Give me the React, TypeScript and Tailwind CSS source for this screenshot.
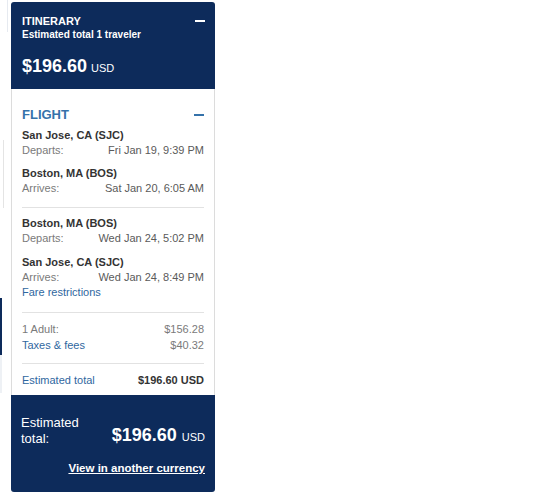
import React from 'react';

const Minus = ({ color }: { color: string }) => (
	<span className={`block h-[2px] w-[10px] ${color}`} />
);

const Stop = ({ city, label, time }: { city: string; label: string; time: string }) => (
	<div>
		<div className="text-[11px] font-bold leading-[15px] text-[#333]">{city}</div>
		<div className="flex justify-between text-[11px] leading-[15px]">
			<span className="text-[#7a7a7a]">{label}</span>
			<span className="text-[#5a5a5a]">{time}</span>
		</div>
	</div>
);

const App = () => {
	return (
		<div
			className="flex h-[498px] w-[550px] bg-white"
			style={{ fontFamily: '"Liberation Sans", Arial, sans-serif' }}
		>
			{/* bits of the page that are cut off on the left */}
			<div className="flex w-[11px] flex-col">
				<div className="h-[32px] w-[8px] border-r border-[#e6eaf0]" />
				<div className="ml-[3px] mt-[108px] h-[68px] w-px bg-[#e4e4e4]" />
				<div className="mt-[90px] h-[57px] w-[2px] bg-[#0d2b5b]" />
				<div className="h-[38px] w-[2px] bg-[#eef1f5]" />
			</div>

			<div className="mt-[2px] w-[204px]">
				{/* header */}
				<div className="rounded-t-[3px] bg-[#0d2b5b] px-[11px] pb-[10px] pt-[12px] text-white">
					<div className="flex items-center justify-between">
						<span className="text-[11px] font-bold leading-[14px]">ITINERARY</span>
						<span className="mr-[-1px]">
							<Minus color="bg-white" />
						</span>
					</div>
					<div className="text-[10px] font-bold leading-[14px]">Estimated total 1 traveler</div>
					<div className="mt-[13px] leading-[22px]">
						<span className="text-[18px] font-bold">$196.60</span>
						<span className="ml-[4px] text-[11px]">USD</span>
					</div>
				</div>

				{/* body */}
				<div className="border-x border-[#dcdcdc] bg-white px-[10px] pb-[7px] pt-[18px]">
					<div className="flex items-center justify-between">
						<span className="text-[13px] font-bold leading-[16px] text-[#3572aa]">FLIGHT</span>
						<Minus color="bg-[#3572aa]" />
					</div>

					<div className="mt-[5px] flex flex-col gap-[8px] border-b border-[#e2e2e2] pb-[11px]">
						<Stop city="San Jose, CA (SJC)" label="Departs:" time="Fri Jan 19, 9:39 PM" />
						<Stop city="Boston, MA (BOS)" label="Arrives:" time="Sat Jan 20, 6:05 AM" />
					</div>

					<div className="border-b border-[#e2e2e2] pb-[12px] pt-[8px]">
						<div className="flex flex-col gap-[9px]">
							<Stop city="Boston, MA (BOS)" label="Departs:" time="Wed Jan 24, 5:02 PM" />
							<Stop city="San Jose, CA (SJC)" label="Arrives:" time="Wed Jan 24, 8:49 PM" />
						</div>
						<div className="text-[11px] leading-[15px] text-[#2f67a0]">Fare restrictions</div>
					</div>

					<div className="border-b border-[#e2e2e2] pb-[10px] pt-[8px] text-[11px] leading-[16px]">
						<div className="flex justify-between">
							<span className="text-[#7a7a7a]">1 Adult:</span>
							<span className="text-[#7a7a7a]">$156.28</span>
						</div>
						<div className="flex justify-between">
							<span className="text-[#2f67a0]">Taxes &amp; fees</span>
							<span className="text-[#7a7a7a]">$40.32</span>
						</div>
					</div>

					<div className="flex justify-between pt-[8px] text-[11px] leading-[16px]">
						<span className="text-[#2f67a0]">Estimated total</span>
						<span className="font-bold text-[#333]">$196.60 USD</span>
					</div>
				</div>

				{/* footer */}
				<div className="rounded-b-[3px] bg-[#0d2b5b] px-[10px] pb-[17px] pt-[20px] text-white">
					<div className="flex items-end justify-between">
						<div className="w-[64px] text-[13px] leading-[16px]">Estimated total:</div>
						<div className="leading-[20px]">
							<span className="text-[18px] font-bold">$196.60</span>
							<span className="ml-[5px] text-[11px]">USD</span>
						</div>
					</div>
					<div className="mt-[14px] text-right text-[11.5px] font-bold leading-[14px] underline">
						View in another currency
					</div>
				</div>
			</div>
		</div>
	);
};

export default App;
